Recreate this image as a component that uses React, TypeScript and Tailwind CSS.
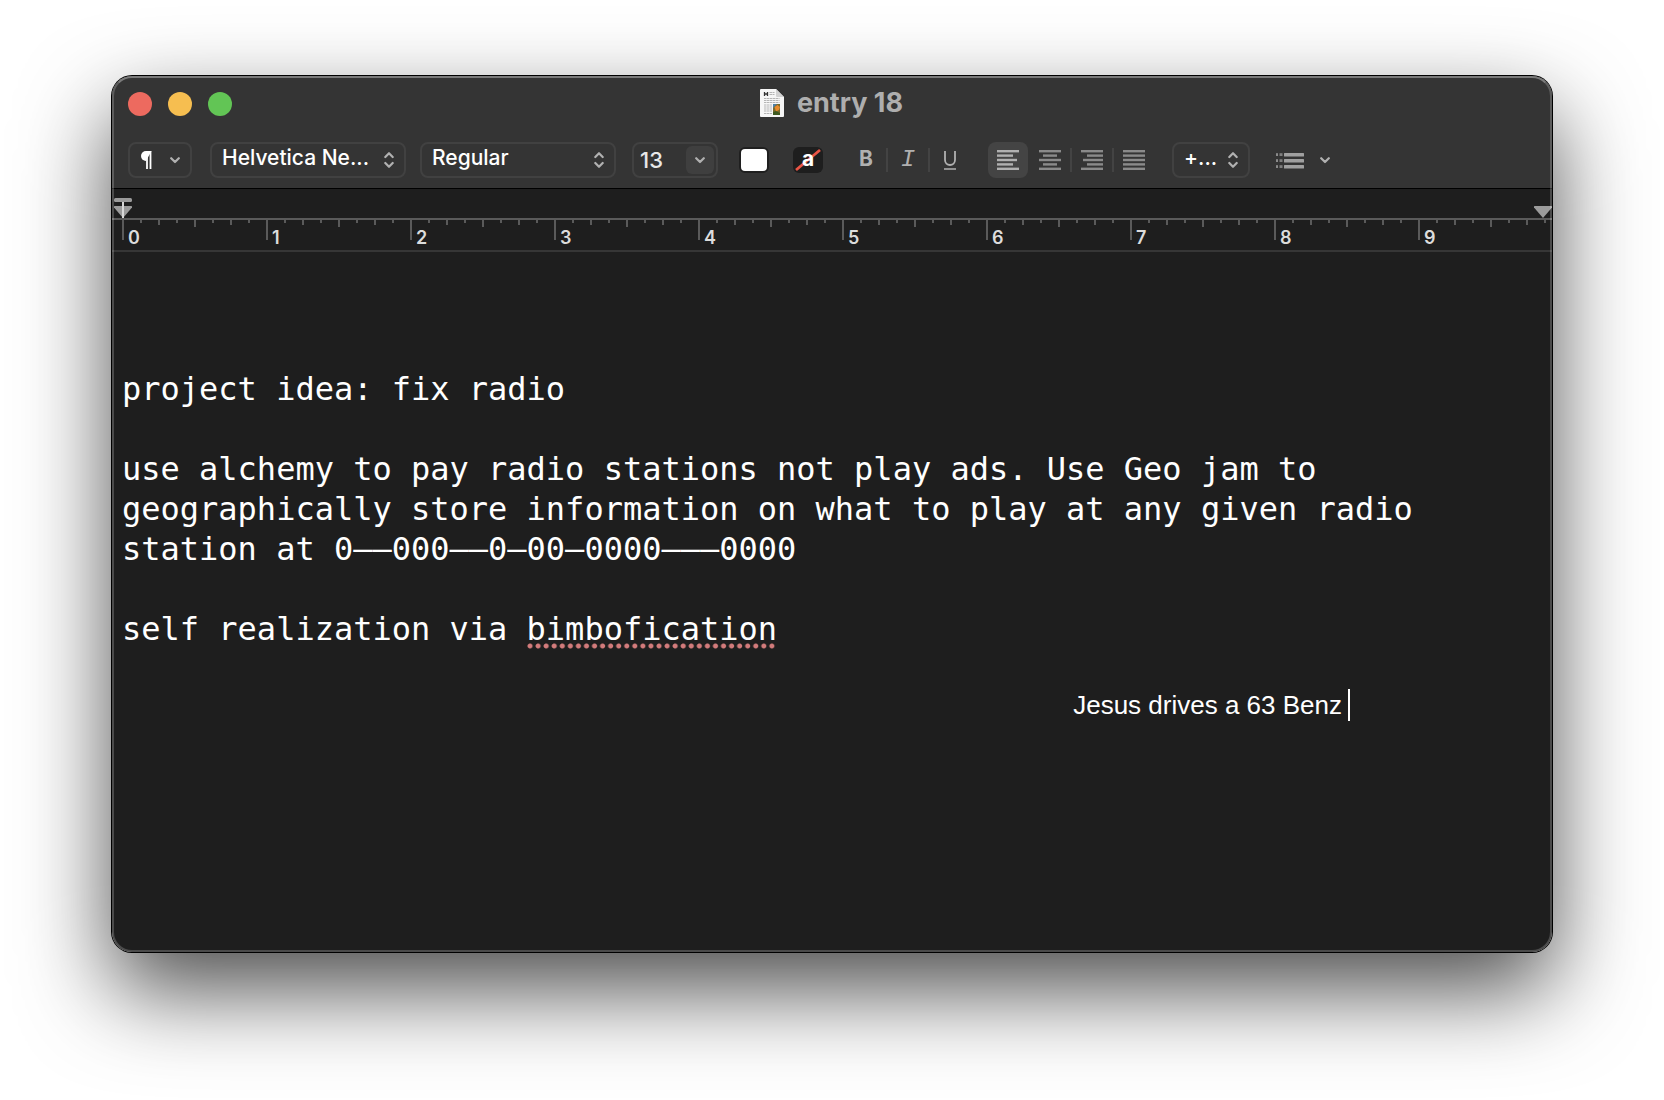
import React from "react";

const INCHES = [0, 1, 2, 3, 4, 5, 6, 7, 8, 9];
const TICKS = ["h-[3px]", "h-[5px]", "h-[3px]", "h-[7px]", "h-[3px]", "h-[5px]", "h-[3px]"];

function Chevron() {
  return (
    <svg width="10" height="7" viewBox="0 0 10 7" fill="none" stroke="#b0b0b0" strokeWidth="2.200" strokeLinecap="round" strokeLinejoin="round" className="pointer-events-none shrink-0" aria-hidden="true">
      <path d="M1.200 1.200L5 5l3.800-3.800" />
    </svg>
  );
}

function UpDown() {
  return (
    <svg width="10" height="16" viewBox="0 0 10 16" fill="none" stroke="#b0b0b0" strokeWidth="2.200" strokeLinecap="round" strokeLinejoin="round" className="pointer-events-none shrink-0 self-center" aria-hidden="true">
      <path d="M1.300 5L5 1.200 8.700 5M1.300 11L5 14.800 8.700 11" />
    </svg>
  );
}

function Popup({ label, value, width }: { label: string; value: string; width: string }) {
  return (
    <label className={`${width} flex h-9 shrink-0 items-start rounded-lg border-2 border-[#414141] pr-[10px] pl-[10px]`}>
      <select aria-label={label} className="h-7 min-w-0 flex-1 appearance-none bg-transparent text-[21px] leading-7 font-medium text-white outline-none">
        <option>{value}</option>
      </select>
      <UpDown />
    </label>
  );
}

function AlignIcon({ lines, color }: { lines: [number, number][]; color: string }) {
  return (
    <svg width="22" height="20" viewBox="0 0 22 20" fill={color} aria-hidden="true">
      {lines.map(([x, w], i) => (
        <rect key={i} x={x} y={i * 4.400} width={w} height="2.400" />
      ))}
    </svg>
  );
}

function Divider() {
  return <span className="h-6 w-[2px] shrink-0 bg-[#434343]" />;
}

function PageIcon() {
  return (
    <svg width="26" height="30" viewBox="0 0 26 30" aria-hidden="true">
      <path d="M2 1h15l8 8v19a1 1 0 0 1-1 1H2a1 1 0 0 1-1-1V2a1 1 0 0 1 1-1z" fill="#f6f6f6" />
      <path d="M17 1l8 8h-7a1 1 0 0 1-1-1z" fill="#d2d2d2" />
      <path d="M5.500 4v4M8.500 4v4M5.500 6h3" stroke="#333" strokeWidth="1.300" />
      <path d="M10.500 4.500h5M10.500 6.500h5M5 10.500h15.500M5 12.500h15.500M5 14.500h15.500M5 17h8M5 19h8M5 21h8M5 23h8M5 25.500h8" stroke="#b5b5b5" strokeWidth="1" strokeDasharray="2.500 .5" />
      <rect x="14" y="16" width="7" height="11" fill="#7b6a2c" />
      <path d="M14 16h4l-4 4z" fill="#4d7fa5" />
      <path d="M15.500 19l3-2 2.500 2-1 3-3 1.500z" fill="#e98a2b" />
      <path d="M14 24l3-1 4 2v2h-7z" fill="#3f5a21" />
    </svg>
  );
}

const FULL: [number, number] = [0, 22];

export default function App() {
  return (
    <div className="min-h-screen overflow-hidden bg-white px-28 pt-19 pb-37 font-['Inter',sans-serif]">
      <main className="relative rounded-[20px] shadow-[0_0_0_1px_#000,0_38px_90px_0_rgba(0,0,0,0.7)]">
        <div className="overflow-hidden rounded-[20px] bg-[#1e1e1e]">
          <header className="border-b border-black bg-[#343434]">
            <div className="grid h-14 grid-cols-[1fr_auto_1fr] items-center px-4">
              <div className="flex gap-4">
                <button aria-label="Close" className="size-6 rounded-full bg-[#ed6a5f]" />
                <button aria-label="Minimize" className="size-6 rounded-full bg-[#f6be50]" />
                <button aria-label="Zoom" className="size-6 rounded-full bg-[#62c555]" />
              </div>
              <div className="flex items-center gap-3 pr-[2px] pb-[2px]">
                <PageIcon />
                <h1 className="text-[27px] leading-8 font-bold text-[#aeaeae]">entry 18</h1>
              </div>
            </div>
            <div className="flex h-14 items-start pt-[10px] pl-4">
              <button aria-label="Paragraph styles" className="flex h-9 w-16 shrink-0 items-center justify-between rounded-lg border-2 border-[#414141] pr-[10px] pl-[10px]">
                <svg width="12" height="20" viewBox="0 0 12 20" aria-hidden="true">
                  <path d="M6 11A5 5 0 0 1 6 1h5.500" fill="#fff" />
                  <path d="M7 1v18M10.500 1v18" stroke="#fff" strokeWidth="1.800" />
                </svg>
                <Chevron />
              </button>
              <div className="ml-[18px] flex shrink-0 gap-[14px]">
                <Popup label="Font family" value="Helvetica Ne..." width="w-49" />
                <Popup label="Typeface" value="Regular" width="w-49" />
              </div>
              <div className="ml-4 flex h-9 w-[86px] shrink-0 items-center rounded-lg border-2 border-[#414141] pr-[2px]">
                <input aria-label="Font size" defaultValue="13" className="w-full min-w-0 bg-transparent pl-[6px] text-[22px] font-medium text-[#e8e8e8] outline-none" />
                <button aria-label="Choose size" className="flex h-7 w-7 shrink-0 items-center justify-center rounded-md bg-[#3f3f3f]">
                  <Chevron />
                </button>
              </div>
              <div className="ml-[21px] flex h-9 shrink-0 items-center gap-6">
                <button aria-label="Text color" className="h-[26px] w-[30px] rounded-md border-2 border-[#1f1f1f] bg-white" />
                <button aria-label="Highlight color" className="flex h-[26px] w-[30px] items-center justify-center rounded-md bg-[#1e1e1e]">
                  <svg width="30" height="26" viewBox="0 0 30 26" aria-hidden="true">
                    <path d="M3 23L27 3" stroke="#ea5545" strokeWidth="2.800" />
                    <text x="15" y="18.500" textAnchor="middle" fontSize="21" fontWeight="700" fill="#fff">a</text>
                  </svg>
                </button>
              </div>
              <div className="ml-[23px] flex h-9 shrink-0 items-center text-[#b0b0b0]">
                <button className="h-9 w-10 pb-[2px] text-[21px] font-bold">B</button>
                <Divider />
                <button className="h-9 w-10 pb-1 font-['Liberation_Mono',monospace] text-[24px] italic">I</button>
                <Divider />
                <button aria-label="Underline" className="flex h-9 w-10 items-center justify-center">
                  <svg width="14" height="20" viewBox="0 0 14 20" fill="none" stroke="#b0b0b0" aria-hidden="true">
                    <path d="M2 1v9a5 5 0 0 0 10 0V1" strokeWidth="1.800" />
                    <path d="M1 19h12" strokeWidth="1.500" />
                  </svg>
                </button>
              </div>
              <div className="ml-[18px] flex h-9 shrink-0 items-center">
                <button aria-label="Align left" className="flex h-9 w-10 items-center justify-center rounded-lg bg-[#444]">
                  <AlignIcon color="#b0b0b0" lines={[FULL, [0, 16], [0, 20], [0, 16], FULL]} />
                </button>
                <button aria-label="Align center" className="ml-[2px] flex h-9 w-10 items-center justify-center">
                  <AlignIcon color="#8a8a8a" lines={[FULL, [4, 14], FULL, [4, 14], FULL]} />
                </button>
                <Divider />
                <button aria-label="Align right" className="flex h-9 w-10 items-center justify-center">
                  <AlignIcon color="#8a8a8a" lines={[FULL, [6, 16], [2, 20], [6, 16], FULL]} />
                </button>
                <Divider />
                <button aria-label="Justify" className="flex h-9 w-10 items-center justify-center">
                  <AlignIcon color="#8a8a8a" lines={[FULL, FULL, FULL, FULL, FULL]} />
                </button>
              </div>
              <div className="ml-[18px] flex shrink-0">
                <Popup label="Spacing" value="+..." width="w-[78px]" />
              </div>
              <button aria-label="List style" className="ml-[26px] flex h-9 shrink-0 items-center gap-4">
                <svg width="28" height="20" viewBox="0 0 28 20" fill="#a0a0a0" aria-hidden="true">
                  {[3, 9, 15].map((y) => (
                    <g key={y}>
                      <rect x="0" y={y + 0.200} width="2" height="2.800" opacity=".8" />
                      <rect x="3.500" y={y + 0.200} width="3" height="2.800" opacity=".7" />
                      <rect x="8" y={y} width="20" height="3.400" rx=".5" />
                    </g>
                  ))}
                </svg>
                <Chevron />
              </button>
            </div>
          </header>

          <div className="border-b-2 border-[#363636] bg-[#1e1e1e] select-none">
            <div className="flex h-[29px] items-end justify-between pl-[2px]">
              <svg width="18" height="20" viewBox="0 0 18 20" aria-hidden="true">
                <rect x="0" y="0" width="18" height="4" rx="1.500" fill="#9b9b9b" />
                <path d="M0 8.500q0-.5.5-.5h17q.5 0 .5.500v1L9 20 0 9.500z" fill="#9b9b9b" />
                <path d="M9 4v16" stroke="#d8d8d8" strokeWidth="2" />
              </svg>
              <svg width="18" height="12" viewBox="0 0 18 12" aria-hidden="true">
                <path d="M0 .5Q0 0 .5 0h17q.5 0 .5.500v1L9 12 0 1.500z" fill="#9b9b9b" />
              </svg>
            </div>
            <div className="flex h-8 overflow-hidden border-t-2 border-[#5a5a5a] pl-[10px]">
              {INCHES.map((n) => (
                <div key={n} className="h-5 w-36 shrink-0 border-l-2 border-[#5a5a5a]">
                  <div className="flex h-[7px] pl-4">
                    {TICKS.map((h, i) => (
                      <span key={i} className={`${h} w-[18px] shrink-0 border-l-2 border-[#5a5a5a]`} />
                    ))}
                  </div>
                  <span className="block pl-1 text-[18px] leading-[22px] font-semibold text-[#dcdcdc]">{n}</span>
                </div>
              ))}
            </div>
          </div>

          <div
            role="textbox"
            aria-label="Document"
            aria-multiline="true"
            contentEditable
            suppressContentEditableWarning
            spellCheck={false}
            className="pt-[117px] pr-14 pb-[231px] pl-[10px] font-['DejaVu_Sans_Mono',monospace] text-[32px] leading-10 text-white outline-none"
          >
            <p>project idea: fix radio</p>
            <p className="mt-10">
              use alchemy to pay radio stations not play ads. Use Geo jam to geographically store information on what to play at any given radio station at 0——000——0–00–0000———0000
            </p>
            <p className="mt-10">
              self realization via{" "}
              <span className="inline-block h-10 bg-[radial-gradient(circle_at_3px_3px,#d27b7b_2px,transparent_3px)] bg-[length:8px_6px] bg-[position:left_bottom] [background-repeat:space_no-repeat]">
                bimbofication
              </span>
            </p>
            <p className="mt-10 flex justify-end pr-[146px] font-['Liberation_Sans',sans-serif] text-[26px] leading-8">
              <span>Jesus drives a 63 Benz</span>
              <span className="ml-[6px] h-8 w-[2px] bg-white" />
            </p>
          </div>
        </div>
        <div className="pointer-events-none absolute inset-0 rounded-[20px] border-2 border-white/20 border-t-white/35" />
      </main>
    </div>
  );
}
